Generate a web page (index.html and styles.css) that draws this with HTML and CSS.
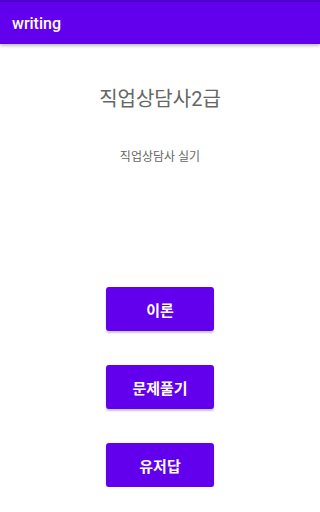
FILE: index.html
```html
<!DOCTYPE html>
<html lang="ko">
<head>
<meta charset="utf-8">
<link rel="stylesheet" href="styles.css">
</head>
<body>
<header class="appbar">
  <div class="statusline"></div>
  <div class="bar"><span class="bar-title">writing</span></div>
</header>
<main class="content">
  <h1 class="title">직업상담사2급</h1>
  <p class="subtitle">직업상담사 실기</p>
  <div class="buttons">
    <button class="btn">이론</button>
    <button class="btn">문제풀기</button>
    <button class="btn">유저답</button>
  </div>
</main>
</body>
</html>
```
FILE: styles.css
```css
html, body {
  margin: 0;
  padding: 0;
  background: #ffffff;
  font-family: Roboto, "Noto Sans CJK KR", sans-serif;
}
.appbar {
  position: relative;
  z-index: 1;
  box-shadow: 0 2px 3px rgba(0,0,0,0.25);
}
.statusline {
  height: 2px;
  background: #4a00c8;
}
.bar {
  height: 42px;
  background: #6200ee;
  display: flex;
  align-items: center;
  padding-left: 12px;
}
.bar-title {
  color: #ffffff;
  font-size: 16px;
  font-weight: 500;
  padding-top: 1px;
}
.content {
  display: flex;
  flex-direction: column;
  align-items: center;
}
.title {
  margin: 41px 0 0;
  font-size: 20px;
  line-height: 28px;
  font-weight: 400;
  color: #666666;
}
.subtitle {
  margin: 36px 0 0;
  font-size: 12px;
  line-height: 16px;
  color: #666666;
}
.buttons {
  margin-top: 122px;
  display: flex;
  flex-direction: column;
  align-items: center;
  gap: 34px;
}
.btn {
  width: 108px;
  height: 44px;
  border: none;
  border-radius: 3px;
  background: #6200ee;
  color: #ffffff;
  font-family: Roboto, "Noto Sans CJK KR", sans-serif;
  font-size: 15px;
  font-weight: 700;
  box-shadow: 0 2px 2px rgba(0,0,0,0.22);
  padding: 0;
}
```
